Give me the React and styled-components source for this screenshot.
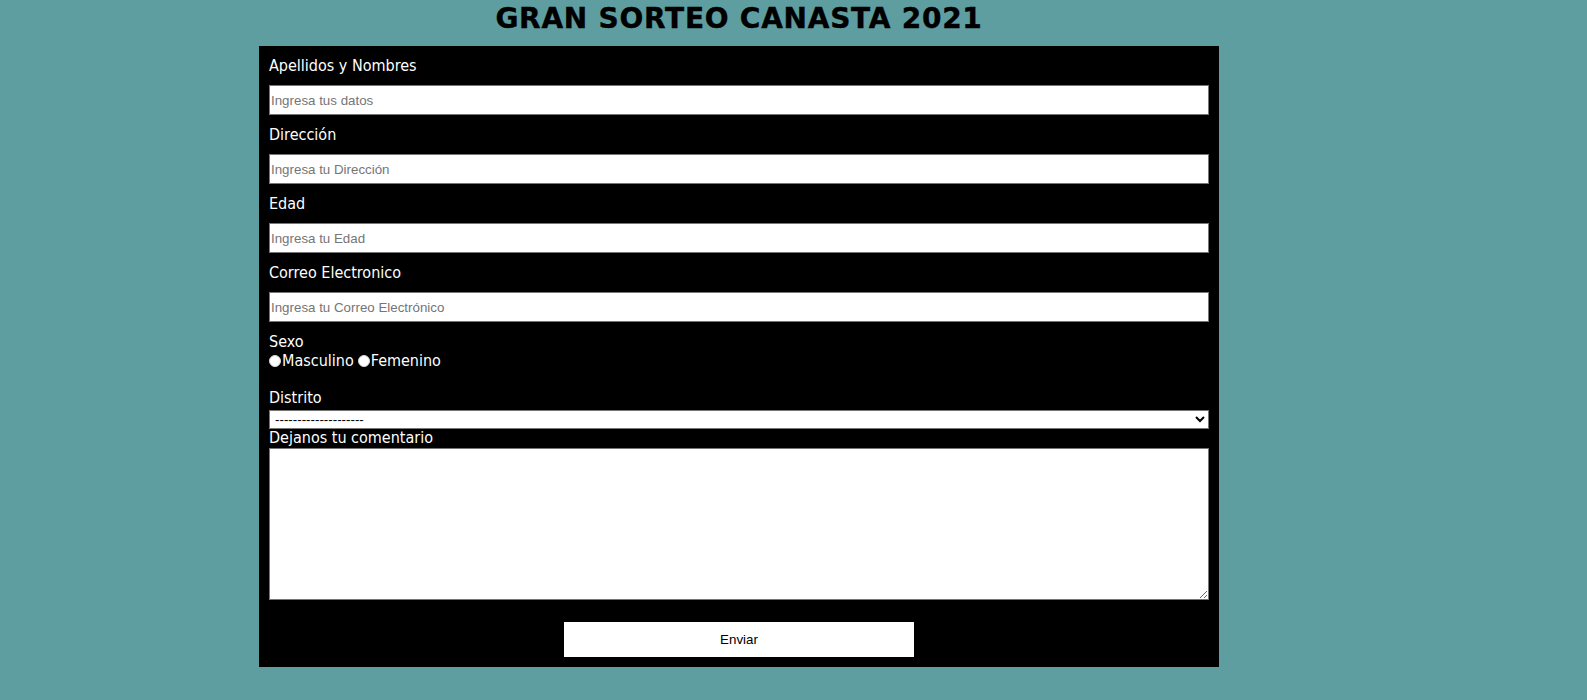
import React from 'react';
import styled, { createGlobalStyle } from 'styled-components';

const GlobalStyle = createGlobalStyle`
    html, body {
        margin: 0;
        background: #5f9ea0;
    }
    body {
        font-family: "DejaVu Sans Condensed", "DejaVu Sans", sans-serif;
        font-stretch: condensed;
    }
`;

const fields = [
    { label: 'Apellidos y Nombres', placeholder: 'Ingresa tus datos' },
    { label: 'Dirección', placeholder: 'Ingresa tu Dirección' },
    { label: 'Edad', placeholder: 'Ingresa tu Edad' },
    { label: 'Correo Electronico', placeholder: 'Ingresa tu Correo Electrónico' },
];

const App = () => (
    <>
        <GlobalStyle />
        <Wrapper>
            <Title>GRAN SORTEO CANASTA 2021</Title>
            <Form onSubmit={(e) => e.preventDefault()}>
                {fields.map(({ label, placeholder }) => (
                    <Field key={label}>
                        <Label>{label}</Label>
                        <TextInput type="text" placeholder={placeholder} />
                    </Field>
                ))}
                <Label>Sexo</Label>
                <RadioRow>
                    <RadioLabel>
                        <Radio type="radio" name="sexo" />
                        Masculino
                    </RadioLabel>
                    <RadioLabel>
                        <Radio type="radio" name="sexo" />
                        Femenino
                    </RadioLabel>
                </RadioRow>
                <Label $top={18}>Distrito</Label>
                <Select defaultValue="">
                    <option value="">--------------------</option>
                    <option value="lima">Lima</option>
                    <option value="miraflores">Miraflores</option>
                </Select>
                <Label $lh={18}>Dejanos tu comentario</Label>
                <TextArea />
                <ButtonRow>
                    <SubmitButton type="submit">Enviar</SubmitButton>
                </ButtonRow>
            </Form>
        </Wrapper>
    </>
);

export default App;

const Wrapper = styled.div`
    width: 960px;
    margin-left: 259px;
`;

const Title = styled.h1`
    margin: 2px 0 10px 0;
    font-family: "DejaVu Sans", sans-serif;
    font-stretch: normal;
    font-size: 28px;
    letter-spacing: 0.75px;
    line-height: 34px;
    font-weight: bold;
    text-align: center;
    color: #000;
    -webkit-text-stroke: 0.4px #000;
`;

const Form = styled.form`
    background: #000;
    padding: 10px;
    display: flex;
    flex-direction: column;
`;

const Field = styled.div`
    display: flex;
    flex-direction: column;
    gap: 10px;
    margin-bottom: 10px;
`;

const Label = styled.label`
    display: block;
    color: #fff;
    font-size: 16px;
    line-height: ${({ $lh }) => $lh || 19}px;
    margin-top: ${({ $top }) => $top || 0}px;
`;

const TextInput = styled.input`
    box-sizing: border-box;
    width: 100%;
    height: 30px;
    margin: 0;
    padding: 1px 1px;
    border: 1px solid #767676;
    background: #fff;
    font-family: "Liberation Sans", Arial, sans-serif;
    font-size: 13.33px;
    color: #000;
    outline: none;
    &::placeholder {
        color: #757575;
    }
`;

const RadioRow = styled.div`
    display: flex;
    align-items: center;
    gap: 4px;
    height: 19px;
`;

const RadioLabel = styled.label`
    display: flex;
    align-items: center;
    color: #fff;
    font-size: 16px;
    line-height: 19px;
`;

const Radio = styled.input`
    appearance: none;
    width: 12px;
    height: 12px;
    margin: 1px 1px 0 0;
    border-radius: 50%;
    background: #fff;
    border: 1px solid #d8d8d8;
    box-sizing: border-box;
`;

const Select = styled.select`
    box-sizing: border-box;
    width: 100%;
    height: 19px;
    margin: 3px 0 0 0;
    padding: 0 0 0 1px;
    border: 1px solid #767676;
    border-radius: 0;
    background: #fff;
    font-family: "Liberation Sans", Arial, sans-serif;
    font-size: 13.33px;
    color: #000;
`;

const TextArea = styled.textarea`
    box-sizing: border-box;
    width: 100%;
    height: 152px;
    margin: 1px 0 0 0;
    border: 1px solid #767676;
    background: #fff;
    resize: both;
`;

const ButtonRow = styled.div`
    display: flex;
    justify-content: center;
    margin-top: 22px;
`;

const SubmitButton = styled.button`
    width: 350px;
    height: 35px;
    border: none;
    background: #fff;
    color: #000;
    font-family: "Liberation Sans", Arial, sans-serif;
    font-size: 13.33px;
    cursor: pointer;
`;
